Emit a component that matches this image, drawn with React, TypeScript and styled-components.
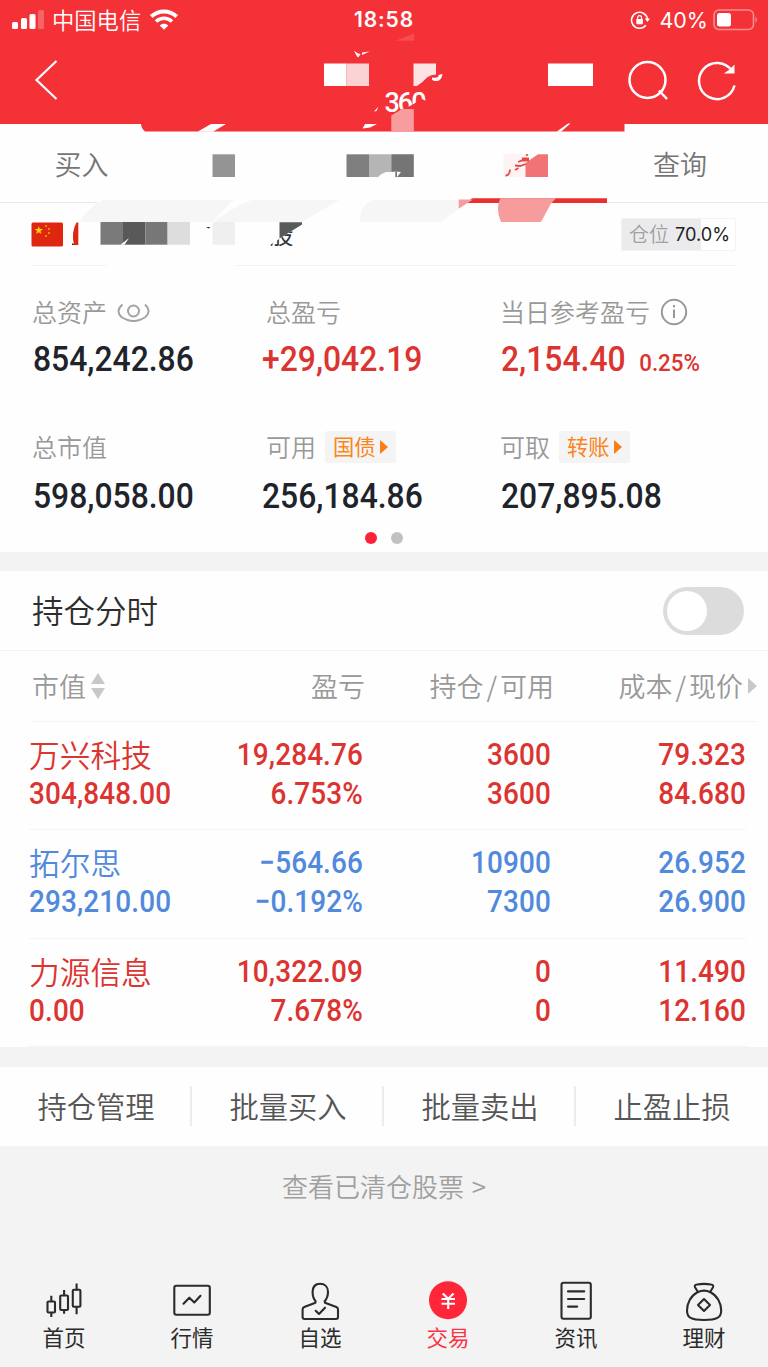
import React from 'react';
import styled, { createGlobalStyle } from 'styled-components';

const cjk = `"Noto Sans CJK SC", "Noto Sans", sans-serif`;
const digits = `Roboto, "Noto Sans CJK SC", sans-serif`;
const RED = '#db3431';
const BLUE = '#5189dd';

const GlobalStyle = createGlobalStyle`
  * { box-sizing: border-box; }
  body { margin: 0; background: #fff; font-family: ${cjk}; }
  svg { display: block; flex: none; }
`;

const Page = styled.div`
  position: relative;
  width: 768px;
  height: 1367px;
  overflow: hidden;
  background: #fefefe;
  display: flex;
  flex-direction: column;
  white-space: nowrap;
`;

const Header = styled.header`
  height: 124px;
  background: #f33137;
  color: #fff;
`;

const StatusBar = styled.div`
  height: 40px;
  display: grid;
  grid-template-columns: 1fr auto 1fr;
  align-items: center;
  padding: 0 9px 0 12px;
`;

const StatusSide = styled.div<{ $end?: boolean }>`
  display: flex;
  align-items: center;
  gap: 9px;
  justify-content: ${(p) => (p.$end ? 'flex-end' : 'flex-start')};
`;

const Carrier = styled.span`
  font-size: 22.3px;
  line-height: 34px;
  font-weight: 350;
  margin: -2px 0 0 -1px;
`;

const Clock = styled.span`
  font: 600 21px/40px Inter, sans-serif;
  letter-spacing: 0.9px;
  margin-left: -3px;
`;

const Percent = styled.span`
  font: 400 21.5px/40px Inter, sans-serif;
  margin-right: -4px;
`;

const NavRow = styled.div`
  height: 80px;
  display: flex;
  align-items: center;
  justify-content: space-between;
  padding: 0 32px 0 32px;
`;

const NavActions = styled.div`
  display: flex;
  gap: 24px;
`;

const Tabs = styled.nav`
  height: 79px;
  display: flex;
  justify-content: space-between;
  padding: 0 61px 0 54.5px;
  border-bottom: 1px solid #e8e8e8;
`;

const Tab = styled.span`
  font-size: 27px;
  line-height: 79px;
  color: #757575;
  font-weight: 350;
`;

const Account = styled.div`
  height: 63px;
  margin: 0 32px 0 31px;
  border-bottom: 1px solid #f2f2f2;
  display: flex;
  align-items: center;
  justify-content: space-between;
`;

const Position = styled.div`
  display: flex;
  align-items: center;
  gap: 6px;
  width: 115px;
  height: 33px;
  padding-left: 7px;
  border: 1px solid #f3f3f4;
  border-radius: 2px;
  background: linear-gradient(90deg, #ebebee 70%, #fff 70%);
`;

const PositionLabel = styled.span`
  font-size: 20px;
  line-height: 30px;
  color: #a0a0a0;
  font-weight: 350;
`;

const PositionValue = styled.span`
  font: 400 18.2px/32px Inter, sans-serif;
  color: #222;
`;

const Stats = styled.section`
  height: 286px;
  padding: 26px 0 0 33px;
  display: grid;
  grid-template-columns: 234px 234px 1fr;
  grid-template-rows: 135px 104px 14px;
`;

const Stat = styled.div`
  display: flex;
  flex-direction: column;
`;

const StatLabel = styled.div`
  display: flex;
  align-items: center;
  gap: 10px;
  height: 40px;
  font-size: 25px;
  font-weight: 350;
  color: #999;
`;

const LabelText = styled.span`
  line-height: 38px;
  margin: -2px 0 0 -1px;
`;

const StatValue = styled.div<{ $tone?: string; $shift?: number; $drop?: boolean }>`
  display: flex;
  align-items: baseline;
  margin: ${(p) => (p.$drop ? 2 : 0)}px 0 0 ${(p) => p.$shift ?? 0}px;
  font: 500 35px/55px ${digits};
  color: ${(p) => p.$tone ?? '#20232a'};
  transform: scaleX(0.91);
  transform-origin: left;
`;

const Ratio = styled.span`
  font-size: 24.5px;
  margin-left: 15px;
`;

const Chip = styled.span`
  display: flex;
  align-items: center;
  gap: 3px;
  width: 71px;
  height: 32px;
  padding-left: 8px;
  border-radius: 3px;
  background: #f4f4f4;
  color: #fb8420;
  font-size: 21.3px;
  font-weight: 400;
  line-height: 28px;
  margin-left: -1px;
`;

const ChipText = styled.span`
  margin-top: -2px;
`;

const Dots = styled.div`
  grid-column: 1 / -1;
  display: flex;
  gap: 14px;
  align-items: center;
  padding-left: 332px;
`;

const Dot = styled.i<{ $on?: boolean }>`
  width: 12px;
  height: 12px;
  border-radius: 50%;
  background: ${(p) => (p.$on ? '#fe2238' : '#c1c1c1')};
`;

const Band = styled.div<{ $size?: number }>`
  height: ${(p) => p.$size ?? 19}px;
  flex: none;
  background: #f3f3f3;
`;

const SectionTitle = styled.div`
  height: 80px;
  padding: 0 24px 0 32px;
  display: flex;
  align-items: center;
  justify-content: space-between;
  border-bottom: 1px solid #f2f2f2;
  font-size: 31.5px;
  font-weight: 350;
  line-height: 74px;
  color: #2e2e2e;
`;

const TitleText = styled.span`
  margin-top: -3px;
`;

const Toggle = styled.div`
  width: 81px;
  height: 48px;
  padding: 4px;
  border-radius: 24px;
  background: #dcdcdc;
`;

const Knob = styled.div`
  width: 40px;
  height: 40px;
  border-radius: 50%;
  background: #fff;
`;

const TableHead = styled.div`
  height: 71px;
  margin: 0 11px 0 32px;
  display: grid;
  grid-template-columns: 1fr 190px 189px 203px;
  border-bottom: 1px solid #f5f5f5;
  font-size: 27px;
  line-height: 68px;
  font-weight: 350;
  color: #999;
`;

const HeadCell = styled.div<{ $start?: boolean }>`
  display: flex;
  align-items: center;
  gap: 5px;
  justify-content: ${(p) => (p.$start ? 'flex-start' : 'flex-end')};
`;

const Slash = styled.span`
  margin: 0 3px;
`;

const Row = styled.div<{ $tone: string }>`
  height: 108.33px;
  flex: none;
  margin: 0 22px 0 29px;
  padding-top: 13px;
  display: grid;
  grid-template-columns: 155px 179px 188px 195px;
  grid-template-rows: 39px 39px;
  border-bottom: 1px solid #f4f4f4;
  color: ${(p) => p.$tone};
`;

const StockName = styled.div`
  font-size: 30.7px;
  line-height: 37px;
  font-weight: 350;
`;

const Figure = styled.div<{ $start?: boolean }>`
  font: 500 31px/39px ${digits};
  letter-spacing: 0.15px;
  text-align: ${(p) => (p.$start ? 'left' : 'right')};
  transform: scaleX(0.9);
  transform-origin: ${(p) => (p.$start ? 'left' : 'right')};
`;

const Actions = styled.div`
  height: 79px;
  flex: none;
  display: grid;
  grid-template-columns: repeat(4, 1fr);
  align-items: center;
`;

const Action = styled.div`
  height: 40px;
  text-align: center;
  font-size: 29.3px;
  font-weight: 350;
  line-height: 39px;
  padding-left: 2px;
  color: #555;
  border-right: 2px solid #ececec;
  &:last-child { border-right-color: transparent; }
`;

const Footer = styled.footer`
  height: 221px;
  flex: none;
  background: #f3f3f3;
  display: flex;
  flex-direction: column;
  justify-content: space-between;
`;

const ClearedLink = styled.div`
  text-align: center;
  font-size: 26px;
  line-height: 79px;
  font-weight: 350;
  color: #a0a0a0;
`;

const Chevron = styled.span`
  margin-left: 2px;
`;

const TabBar = styled.nav`
  height: 90px;
  display: grid;
  grid-template-columns: repeat(6, 1fr);
`;

const TabItem = styled.div<{ $active?: boolean }>`
  display: flex;
  flex-direction: column;
  align-items: center;
  font-size: 21.5px;
  line-height: 24px;
  color: ${(p) => (p.$active ? '#fb3346' : '#2b2b2b')};
`;

const Overlay = styled.svg`
  position: absolute;
  left: 0;
  top: 0;
  pointer-events: none;
`;

const Signal = () => (
  <svg width="32" height="20" fill="#fff">
    <rect x="0" y="12" width="6" height="7" rx="1.5" />
    <rect x="9" y="8" width="6" height="11" rx="1.5" />
    <rect x="17.5" y="4" width="6" height="15" rx="1.5" />
    <rect x="26" y="0" width="6" height="19" rx="1.5" opacity="0.25" />
  </svg>
);

const Wifi = () => (
  <svg width="28" height="22" viewBox="0 0 28 22" fill="none" stroke="#fff">
    <path d="M1.3 7.6C8.5 .8 19.5 .8 26.7 7.6" strokeWidth="4" />
    <path d="M6 12.5C10.6 8.2 17.4 8.2 22 12.5" strokeWidth="3.600" />
    <path d="M9.700 16.5C12.300 14 15.700 14 18.300 16.500L14 20.700Z" fill="#fff" stroke="none" />
  </svg>
);

const RotationLock = () => (
  <svg width="20" height="20" viewBox="0 0 20 20" fill="none" stroke="#fff" strokeWidth="1.600">
    <path d="M15.8 15.2A8 8 0 1 1 17.5 9.5" />
    <path d="M14.7 8.5H20L17.5 12Z" fill="#fff" stroke="none" />
    <rect x="6.3" y="9" width="6.6" height="5.2" rx=".6" fill="#fff" stroke="none" />
    <path d="M7.7 9V7.600a1.900 1.900 0 0 1 3.800 0V9" strokeWidth="1.200" />
  </svg>
);

const Battery = () => (
  <svg width="46" height="22" fill="none">
    <rect x="1" y="1" width="39.5" height="19.5" rx="5" stroke="#fff" strokeOpacity=".45" strokeWidth="1.600" />
    <rect x="4" y="4" width="14" height="13.5" rx="2.5" fill="#fff" />
    <path d="M42.5 7.5q3 3 0 6.500z" fill="#fff" opacity=".45" />
  </svg>
);

const iconProps = {
  width: 48,
  height: 48,
  viewBox: '0 0 48 48',
  fill: 'none',
  stroke: '#2b2b2b',
  strokeWidth: 2.1,
  strokeLinejoin: 'round' as const,
  strokeLinecap: 'round' as const,
};

const Candles = () => (
  <svg {...iconProps} strokeLinecap="butt">
    <rect x="7.5" y="24.5" width="7.500" height="11" rx="1" />
    <path d="M11.3 18.7v6M11.3 35.500v4.500" />
    <rect x="20.2" y="18.5" width="7.800" height="14.500" rx="1" />
    <path d="M24.1 13v6M24.1 33v3.700" />
    <rect x="32.8" y="12.8" width="7.600" height="17" rx="1" />
    <path d="M36.600 6.500v7M36.600 29.800v7.500" />
  </svg>
);

const Quotes = () => (
  <svg {...iconProps}>
    <rect x="6.3" y="8.700" width="35.500" height="29" rx="2" />
    <path d="M15.5 26.700L21.300 20.700L26.300 25.500L32.500 18.800" />
  </svg>
);

const Watchlist = () => (
  <svg {...iconProps}>
    <path d="M19.600 24.200C17.500 21.800 16.600 18.500 16.600 15C16.600 9.800 19.500 6.800 24.100 6.800S32 9.800 32 15C32 18.500 30.800 21.800 28.700 24.200L29 25.700L40.300 30Q42 30.700 42 32.500V40Q42 42 40 42H8.600Q6.600 42 6.600 40V32.500Q6.600 30.700 8.300 30L19.400 25.700Z" />
    <path d="M19.700 33.800L23 37L29 30.700" />
  </svg>
);

const Trade = () => (
  <svg {...iconProps} stroke="#fff" strokeLinecap="butt">
    <circle cx="24" cy="23.3" r="19" fill="#fe2638" stroke="none" />
    <path d="M18.800 16.500L24.200 21.800L29.600 16.500M17.500 22H31M17.500 26.800H31M24.200 21.500V32" />
  </svg>
);

const News = () => (
  <svg {...iconProps}>
    <rect x="9.500" y="5.800" width="29.300" height="36" rx="2" />
    <path d="M16 14.400H32.200M16 22H32.200M16 29.600H25.200" />
  </svg>
);

const Wealth = () => (
  <svg {...iconProps}>
    <path d="M17.800 14.800L15 10.200Q14 7.800 17 7.500Q24 6.300 31 7.500Q34 7.800 33 10.200L30.300 14.800" />
    <path d="M17.500 15.200Q24 12 30.500 15.200C37 18.500 41.200 26 41.200 33.500C41.200 40.500 37 43 24 43S7 40.500 7 33.500C7 26 11 18.500 17.500 15.200Z" />
    <path d="M24 22L30 28L24 34L18 28Z" />
  </svg>
);

const Fragments = () => (
  <Overlay width="768" height="310" viewBox="0 0 768 310">
    <defs>
      <clipPath id="digitsTop">
        <path d="M380 90H426V101L420 98L417 102L410 106L402 109L398 114H380Z" />
      </clipPath>
      <clipPath id="shareTail">
        <path d="M270 245L302 224V246H270Z" />
      </clipPath>
    </defs>
    <path d="M141 123.500H624.500V131.600H145Q141 128 141 123.500Z" fill="#f33137" />
    <g fill="#fff">
      <path d="M354 50.800L358 53.500L360.500 54L358.500 57.300L357 56.500ZM362 52.500L369.500 51.500L362 55Z" />
      <path d="M324 63.500h22.500v22.500H324zM548 63.500h45v22.500h-45z" />
      <path d="M378.500 106.500L374 111.500L376.500 111ZM432 79.500V77.500Q438.500 78.500 438.500 75.500Q439.500 74 442.500 74Q441.500 80.500 437 81Q433.500 81.500 432 79.500Z" />
      <path d="M211 124H226L213 131.700H197.500ZM365 124H377L370 127.500L362.500 128.600ZM568 123.500H570.500L561 131.700H556.500Z" />
    </g>
    <path d="M346.500 63.500h22.500v22.500h-22.500z" fill="#fbd2d4" />
    <path d="M395.500 40.700L414 33.500V40.700Z" fill="#f64b50" />
    <path d="M413.500 63.500H436V74.500Q431 74.500 427 77.500Q422 83 417 86H413.500Z" fill="#fce4e5" />
    <text x="384.500" y="111.500" clipPath="url(#digitsTop)" fill="#fff" fontFamily="Roboto, sans-serif" fontSize="27" fontWeight="500" textLength="42">360</text>
    <path d="M391.300 115.500L402 109H413.800V131.600H391.300Z" fill="#f99c9f" />

    <path d="M212.500 154.300H235V177H212.500Z" fill="#949494" />
    <path d="M346.500 154.300H369V177H346.500Z" fill="#7f7f7f" />
    <path d="M369 154.300H391.300V172H386Q381 173.500 378 177H369Z" fill="#b5b5b5" />
    <path d="M391.300 154.300H413.800V177H397L401 172L395.500 171.500L391.300 172Z" fill="#757575" />
    <path d="M395.300 171.500H397V177H395.300Z" fill="#757575" />
    <path d="M503.500 154.300H525.500V177H503.500Z" fill="#fdf3f3" />
    <path d="M525.500 163L538 154.300H548V177H525.500Z" fill="#f07475" />
    <path d="M505.500 175.500Q509.500 175.500 510 169.500M515 170L518.500 168M515 165.500L520 166L526 164M518 162L522 160.500L529 160.500M522 158.500H529M526 155.500L528 154.500" fill="none" stroke="#e64a4a" strokeWidth="1.800" />

    <path d="M101 199H472V223H79Z" fill="#fefefe" />
    <g fill="#f6f6f6">
      <path d="M104 199.700H233.500L212 222H79Q92 204 104 199.700Z" />
      <path d="M253 199.700H340L301.500 222H213Q240 203 253 199.700Z" />
      <path d="M373 199.700H458.700V208.500L441 222H360Q359 206 373 199.700Z" />
    </g>
    <path d="M472 198.300H607V203H466Z" fill="#e8312f" />
    <path d="M458.700 199.500H473L466 204L458.700 208.700ZM500.500 198.300H556L551 203.500L541 222H501Q495 208 500.500 198.300Z" fill="#f69c9d" />

    <rect x="31.500" y="222.500" width="31.500" height="24" rx="1.500" fill="#de2611" />
    <path d="M38.800 226L39.800 229L43 229L40.500 231L41.500 234L38.800 232.200L36.100 234L37.100 231L34.600 229L37.800 229Z" fill="#ffd800" />
    <g fill="#f5a500">
      <circle cx="46" cy="226" r="1.100" />
      <circle cx="49" cy="229" r="1.100" />
      <circle cx="49" cy="233" r="1.100" />
      <circle cx="46" cy="236" r="1.100" />
    </g>
    <path d="M78.300 222.500V245H74Q71 232 76.500 222.500Z" fill="#de2611" />
    <path d="M72 243L75 245H72Z" fill="#333" />
    <path d="M100.500 222h22.500v22.700h-22.500z" fill="#7a7a7a" />
    <path d="M123 222h22.300v22.700h-22.300z" fill="#595959" />
    <path d="M145.300 222h22.300v22.700h-22.300z" fill="#777" />
    <path d="M167.600 222h22.400v22.700h-22.400z" fill="#ddd" />
    <path d="M212.500 222h22.500v22.700h-22.500z" fill="#efefef" />
    <path d="M129 238L120.500 244.700H124.500Z" fill="#fefefe" />
    <path d="M206 227L210.500 227L208.500 228.500Z" fill="#333" />
    <text x="269.500" y="243.500" clipPath="url(#shareTail)" fill="#333" fontFamily={cjk} fontSize="24">股</text>
    <path d="M279.500 222.300H302V224.500L279.500 238.500Z" fill="#595959" />
    <path d="M106 263H236V268H106Z" fill="#fefefe" />
  </Overlay>
);

const positions = [
  { name: '万兴科技', value: '304,848.00', profit: '19,284.76', rate: '6.753%', held: '3600', free: '3600', cost: '79.323', price: '84.680', tone: RED },
  { name: '拓尔思', value: '293,210.00', profit: '−564.66', rate: '−0.192%', held: '10900', free: '7300', cost: '26.952', price: '26.900', tone: BLUE },
  { name: '力源信息', value: '0.00', profit: '10,322.09', rate: '7.678%', held: '0', free: '0', cost: '11.490', price: '12.160', tone: RED },
];

const tabItems = [
  { label: '首页', Icon: Candles },
  { label: '行情', Icon: Quotes },
  { label: '自选', Icon: Watchlist },
  { label: '交易', Icon: Trade, active: true },
  { label: '资讯', Icon: News },
  { label: '理财', Icon: Wealth },
];

const LinkChip = ({ text }: { text: string }) => (
  <Chip>
    <ChipText>{text}</ChipText>
    <svg width="9" height="14"><path d="M1 0L9 7L1 14Z" fill="#fb7d14" /></svg>
  </Chip>
);

export default function App() {
  return (
    <Page>
      <GlobalStyle />
      <Header>
        <StatusBar>
          <StatusSide>
            <Signal />
            <Carrier>中国电信</Carrier>
            <Wifi />
          </StatusSide>
          <Clock>18:58</Clock>
          <StatusSide $end>
            <RotationLock />
            <Percent>40%</Percent>
            <Battery />
          </StatusSide>
        </StatusBar>
        <NavRow>
          <svg width="28" height="44" fill="none" stroke="#fff" strokeWidth="2.200">
            <path d="M24.500 3L4.500 22L24.500 41" />
          </svg>
          <NavActions>
            <svg width="42" height="44" fill="none" stroke="#fff" strokeWidth="2.500">
              <circle cx="21.500" cy="22" r="18" />
              <path d="M33 32.500L41 41" />
            </svg>
            <svg width="44" height="44" fill="none" stroke="#fff" strokeWidth="2.500">
              <path d="M42.500 27.500A18 18 0 1 1 40 13" />
              <path d="M41.500 9V14.500H35L38.500 12Z" fill="#fff" strokeWidth="2" />
            </svg>
          </NavActions>
        </NavRow>
      </Header>
      <Tabs>
        <Tab>买入</Tab>
        <Tab>查询</Tab>
      </Tabs>
      <Account>
        <span />
        <Position>
          <PositionLabel>仓位</PositionLabel>
          <PositionValue>70.0%</PositionValue>
        </Position>
      </Account>
      <Stats>
        <Stat>
          <StatLabel>
            <LabelText>总资产</LabelText>
            <svg width="34" height="24" fill="none" stroke="#a3a3a3" strokeWidth="2">
              <path d="M5.500 4.500Q-2 11 4.500 17Q16.500 25 28.500 17Q35 11 28 4.500" />
              <circle cx="16.500" cy="11" r="5.500" />
            </svg>
          </StatLabel>
          <StatValue>854,242.86</StatValue>
        </Stat>
        <Stat>
          <StatLabel><LabelText>总盈亏</LabelText></StatLabel>
          <StatValue $tone={RED} $shift={-5}>+29,042.19</StatValue>
        </Stat>
        <Stat>
          <StatLabel>
            <LabelText>当日参考盈亏</LabelText>
            <svg width="28" height="28" fill="none" stroke="#999" strokeWidth="2">
              <circle cx="14" cy="14" r="12.200" />
              <path d="M14 11.500V20M14 7V9.200" />
            </svg>
          </StatLabel>
          <StatValue $tone={RED}>2,154.40<Ratio>0.25%</Ratio></StatValue>
        </Stat>
        <Stat>
          <StatLabel><LabelText>总市值</LabelText></StatLabel>
          <StatValue $drop>598,058.00</StatValue>
        </Stat>
        <Stat>
          <StatLabel><LabelText>可用</LabelText><LinkChip text="国债" /></StatLabel>
          <StatValue $drop $shift={-5}>256,184.86</StatValue>
        </Stat>
        <Stat>
          <StatLabel><LabelText>可取</LabelText><LinkChip text="转账" /></StatLabel>
          <StatValue $drop>207,895.08</StatValue>
        </Stat>
        <Dots>
          <Dot $on />
          <Dot />
        </Dots>
      </Stats>
      <Band />
      <SectionTitle>
        <TitleText>持仓分时</TitleText>
        <Toggle><Knob /></Toggle>
      </SectionTitle>
      <TableHead>
        <HeadCell $start>
          <span>市值</span>
          <svg width="14" height="26" fill="#c8c8c8"><path d="M0 11L7 0L14 11ZM0 15H14L7 26Z" /></svg>
        </HeadCell>
        <HeadCell>盈亏</HeadCell>
        <HeadCell><span>持仓<Slash>/</Slash>可用</span></HeadCell>
        <HeadCell>
          <span>成本<Slash>/</Slash>现价</span>
          <svg width="9" height="16" fill="#c8c8c8"><path d="M0 0L9 8L0 16Z" /></svg>
        </HeadCell>
      </TableHead>
      {positions.map((p) => (
        <Row key={p.name} $tone={p.tone}>
          <StockName>{p.name}</StockName>
          <Figure>{p.profit}</Figure>
          <Figure>{p.held}</Figure>
          <Figure>{p.cost}</Figure>
          <Figure $start>{p.value}</Figure>
          <Figure>{p.rate}</Figure>
          <Figure>{p.free}</Figure>
          <Figure>{p.price}</Figure>
        </Row>
      ))}
      <Band $size={20} />
      <Actions>
        <Action>持仓管理</Action>
        <Action>批量买入</Action>
        <Action>批量卖出</Action>
        <Action>止盈止损</Action>
      </Actions>
      <Footer>
        <ClearedLink>查看已清仓股票<Chevron> &gt;</Chevron></ClearedLink>
        <TabBar>
          {tabItems.map(({ label, Icon, active }) => (
            <TabItem key={label} $active={active}>
              <Icon />
              {label}
            </TabItem>
          ))}
        </TabBar>
      </Footer>
      <Fragments />
    </Page>
  );
}
